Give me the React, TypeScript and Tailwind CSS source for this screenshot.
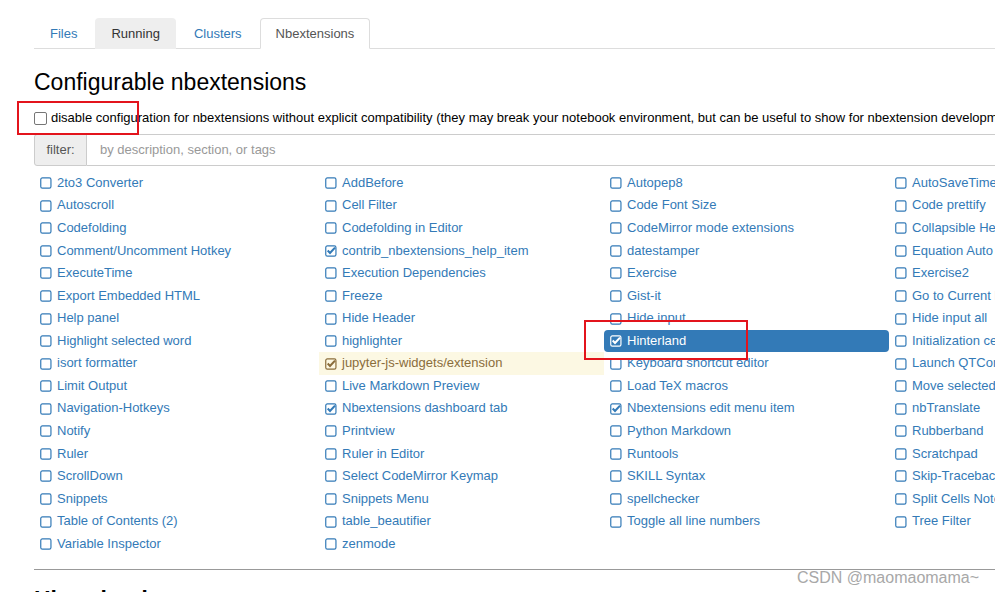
type Ext = { name: string; checked?: boolean; state?: "active" | "warning" };

const extensions: Ext[] = [
  { name: "2to3 Converter" },
  { name: "AddBefore" },
  { name: "Autopep8" },
  { name: "AutoSaveTime" },
  { name: "Autoscroll" },
  { name: "Cell Filter" },
  { name: "Code Font Size" },
  { name: "Code prettify" },
  { name: "Codefolding" },
  { name: "Codefolding in Editor" },
  { name: "CodeMirror mode extensions" },
  { name: "Collapsible Headings" },
  { name: "Comment/Uncomment Hotkey" },
  { name: "contrib_nbextensions_help_item", checked: true },
  { name: "datestamper" },
  { name: "Equation Auto Numbering" },
  { name: "ExecuteTime" },
  { name: "Execution Dependencies" },
  { name: "Exercise" },
  { name: "Exercise2" },
  { name: "Export Embedded HTML" },
  { name: "Freeze" },
  { name: "Gist-it" },
  { name: "Go to Current Running Cells" },
  { name: "Help panel" },
  { name: "Hide Header" },
  { name: "Hide input" },
  { name: "Hide input all" },
  { name: "Highlight selected word" },
  { name: "highlighter" },
  { name: "Hinterland", checked: true, state: "active" },
  { name: "Initialization cells" },
  { name: "isort formatter" },
  { name: "jupyter-js-widgets/extension", checked: true, state: "warning" },
  { name: "Keyboard shortcut editor" },
  { name: "Launch QTConsole" },
  { name: "Limit Output" },
  { name: "Live Markdown Preview" },
  { name: "Load TeX macros" },
  { name: "Move selected cells" },
  { name: "Navigation-Hotkeys" },
  { name: "Nbextensions dashboard tab", checked: true },
  { name: "Nbextensions edit menu item", checked: true },
  { name: "nbTranslate" },
  { name: "Notify" },
  { name: "Printview" },
  { name: "Python Markdown" },
  { name: "Rubberband" },
  { name: "Ruler" },
  { name: "Ruler in Editor" },
  { name: "Runtools" },
  { name: "Scratchpad" },
  { name: "ScrollDown" },
  { name: "Select CodeMirror Keymap" },
  { name: "SKILL Syntax" },
  { name: "Skip-Traceback" },
  { name: "Snippets" },
  { name: "Snippets Menu" },
  { name: "spellchecker" },
  { name: "Split Cells Notebook" },
  { name: "Table of Contents (2)" },
  { name: "table_beautifier" },
  { name: "Toggle all line numbers" },
  { name: "Tree Filter" },
  { name: "Variable Inspector" },
  { name: "zenmode" },
];

function CheckIcon({ checked }: { checked?: boolean }) {
  return (
    <svg width="12" height="12" viewBox="0 0 12 12" className="mr-[5px] shrink-0">
      <rect x="0.75" y="0.9" width="10.2" height="10.2" rx="1.6" fill="none" stroke="currentColor" strokeWidth="1.2" />
      {checked ? <path d="M2.7 5.6 L5 7.9 L10 2.6" fill="none" stroke="currentColor" strokeWidth="2.1" /> : null}
    </svg>
  );
}

function ExtItem({ ext }: { ext: Ext }) {
  const tone =
    ext.state === "active"
      ? "bg-[#337ab7] text-white rounded-[4px]"
      : ext.state === "warning"
        ? "bg-[#fcf8e3] text-[#8a6d3b]"
        : "text-[#337ab7]";
  return (
    <div className={`flex h-[22.57px] items-center overflow-hidden whitespace-nowrap pl-[6px] ${tone}`}>
      <CheckIcon checked={ext.checked} />
      <span>{ext.name}</span>
    </div>
  );
}

export default function App() {
  return (
    <div className="relative h-[592px] w-[995px] overflow-hidden bg-white font-['Liberation_Sans',Arial,sans-serif] text-[13px] leading-[18.57px] text-black">
      <div className="ml-[34px] w-[1140px] pt-[18px]">
        <ul className="flex h-[31px] border-b border-[#ddd]">
          <li className="mr-[2px]">
            <a className="block h-[31px] border border-transparent px-[15px] leading-[29px] text-[#337ab7]">Files</a>
          </li>
          <li className="mr-[2px]">
            <a className="block h-[31px] rounded-t-[4px] border border-transparent bg-[#eee] px-[15px] leading-[29px] text-[#333]">Running</a>
          </li>
          <li className="mr-[2px]">
            <a className="block h-[31px] border border-transparent px-[15px] leading-[29px] text-[#337ab7]">Clusters</a>
          </li>
          <li>
            <a className="block h-[31px] rounded-t-[4px] border border-[#ddd] border-b-white bg-white px-[15px] leading-[29px] text-[#555]">Nbextensions</a>
          </li>
        </ul>

        <h3 className="mt-[21px] text-[23px] leading-[1.1] font-normal text-black">Configurable nbextensions</h3>

        <label className="mt-[14px] flex h-[18.57px] items-center whitespace-nowrap">
          <span className="mr-[4px] h-[13px] w-[13px] shrink-0 rounded-[2px] border border-[#767676] bg-white" />
          disable configuration for nbextensions without explicit compatibility (they may break your notebook environment, but can be useful to show for nbextension development)
        </label>

        <div className="mt-[6px] flex h-[32px]">
          <div className="flex w-[53px] items-center justify-center rounded-l-[3px] border border-[#ccc] bg-[#eee] text-[#555]">filter:</div>
          <div className="flex flex-1 items-center border-y border-[#ccc] pl-[13px] text-[#999]">by description, section, or tags</div>
        </div>

        <div className="mt-[6px] grid grid-cols-[repeat(4,285px)]">
          {extensions.map((ext) => (
            <ExtItem key={ext.name} ext={ext} />
          ))}
        </div>

        <hr className="mt-[14px] border-t border-[#999]" />
        <h3 className="mt-[18px] text-[23px] leading-[1.1] font-bold text-black">Hinterland</h3>
      </div>

      <div className="absolute left-[17px] top-[101px] h-[34px] w-[122px] border-2 border-[#e3141c]" />
      <div className="absolute left-[584px] top-[320px] h-[40px] w-[164px] border-2 border-[#e3141c]" />
      <div className="absolute left-[797px] top-[568px] text-[16px] leading-[20px] text-[#a8a8a8]">CSDN @maomaomama~</div>
    </div>
  );
}
